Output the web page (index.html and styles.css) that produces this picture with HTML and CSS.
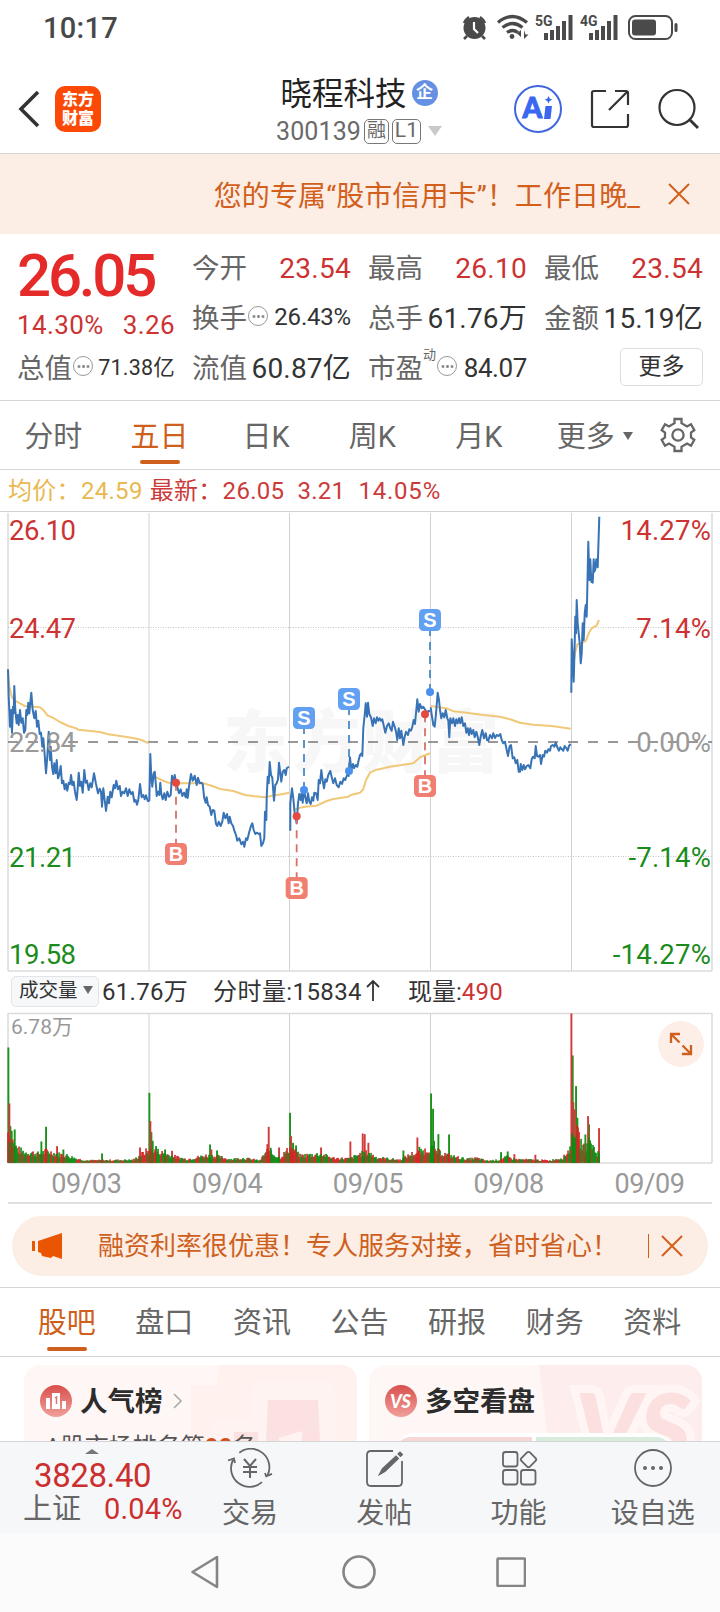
FILE: index.html
```html
<!DOCTYPE html>
<html lang="zh-CN">
<head>
  <meta charset="UTF-8">
  <meta name="viewport" content="width=device-width, initial-scale=1.0">
  <title>晓程科技 300139</title>
  <link rel="stylesheet" href="styles.css">
</head>
<body>
  <div class="status">
    <span class="time">10:17</span>
    <svg class="status-icons" width="220" height="30" viewBox="0 0 220 30">
      <g fill="#4a4a4a">
        <circle cx="15.500" cy="15" r="11"/>
        <path d="M5 10a14 14 0 0 1 5-6M26 10a14 14 0 0 0-5-6M8 23l-3 3M23 23l3 3" fill="none" stroke="#4a4a4a" stroke-width="2.600"/>
        <path d="M15 9v7l4 4" fill="none" stroke="#fff" stroke-width="2.200"/>
        <path d="M39 9.500q14-12 29 0M43.500 14.500q10-8 20 0M48 19.500q5.500-4 11 0" fill="none" stroke="#4a4a4a" stroke-width="3.200"/>
        <circle cx="53" cy="23.500" r="2.400"/>
        <path d="M62 17v7l-4-3.500zM65 17v9l4.500-4.500h-3z"/>
        <text x="76" y="13" class="net">5G</text>
        <path d="M85 20h4v7h-4zM91 17h4v10h-4zM97 13h4v14h-4zM103 8h4v19h-4zM109.500 2h4v25h-4z"/>
        <text x="121" y="13" class="net">4G</text>
        <path d="M130 20h4v7h-4zM136 17h4v10h-4zM142 13h4v14h-4zM148 8h4v19h-4zM154.500 2h4v25h-4z"/>
        <rect x="170" y="3" width="43" height="23" rx="6.500" fill="none" stroke="#4a4a4a" stroke-width="2"/>
        <rect x="173" y="6.500" width="24" height="16" rx="3"/>
        <rect x="215.500" y="10" width="3" height="9" rx="1.500"/>
      </g>
    </svg>
  </div>

  <header class="header">
    <svg class="back" width="24" height="40" viewBox="0 0 24 40"><path d="M21 3L4 20l17 17" fill="none" stroke="#333" stroke-width="3.600"/></svg>
    <div class="logo">东方<br>财富</div>
    <div class="title">
      <div class="name">晓程科技<span class="badge">企</span></div>
      <div class="code">300139<i class="tag">融</i><i class="tag tag-l">L1</i><i class="down"></i></div>
    </div>
    <div class="tools">
      <svg width="50" height="50" viewBox="0 0 50 50">
        <circle cx="25" cy="25" r="23" fill="none" stroke="#3f66e0" stroke-width="2"/>
        <text x="9.500" y="34" class="ai">A</text>
        <path d="M32.500 22h6.500l-1.500 13h-6.500z" fill="#3a66f0"/>
        <path d="M35.500 12l1.200 2.500 2.500 1.200-2.500 1.200-1.200 2.500-1.200-2.500-2.500-1.200 2.500-1.200z" fill="#3a66f0"/>
      </svg>
      <svg width="40" height="40" viewBox="0 0 40 40" fill="none" stroke="#333" stroke-width="2.200">
        <path d="M16 2H4q-2 0-2 2v32q0 2 2 2h32q2 0 2-2V25M25 2h11q2 0 2 2v12M37 3L19 21"/>
      </svg>
      <svg width="42" height="42" viewBox="0 0 42 42" fill="none" stroke="#333" stroke-width="2.200">
        <circle cx="20" cy="19.500" r="17.500"/><path d="M32 31l9 9" stroke-width="2.800"/>
      </svg>
    </div>
  </header>

  <div class="banner">
    <span>您的专属“股市信用卡”！工作日晚_</span>
    <svg class="close" width="22" height="22" viewBox="0 0 22 22"><path d="M1 1l20 20M21 1L1 21"/></svg>
  </div>

  <section class="quote">
    <div class="main">
      <div class="price">26.05</div>
      <div class="change"><span>14.30%</span><span>3.26</span></div>
      <div class="cell"><label>总值</label><i class="more-dot"></i><b class="small">71.38亿</b></div>
    </div>
    <div class="grid">
      <div class="cell"><label>今开</label><b class="red">23.54</b></div>
      <div class="cell"><label>最高</label><b class="red">26.10</b></div>
      <div class="cell"><label>最低</label><b class="red">23.54</b></div>
      <div class="cell"><label>换手</label><i class="more-dot"></i><b class="mid">26.43%</b></div>
      <div class="cell"><label>总手</label><b>61.76万</b></div>
      <div class="cell"><label>金额</label><b>15.19亿</b></div>
      <div class="cell"><label>流值</label><b>60.87亿</b></div>
      <div class="cell"><label>市盈</label><sup>动</sup><i class="more-dot"></i><b class="pe">84.07</b></div>
      <div class="cell"><button class="btn-more">更多</button></div>
    </div>
  </section>

  <nav class="period">
    <a>分时</a><a class="active">五日</a><a>日K</a><a>周K</a><a>月K</a><a>更多<i class="tri"></i></a>
    <svg width="36" height="36" viewBox="0 0 36 36" fill="none" stroke="#666" stroke-width="2.300">
      <path d="M14.500 2h7v4.200l5.500 3.200 4-2.200 3.300 6-3.300 2.300v5l3.300 2.300-3.300 6-4-2.200-5.500 3.200V34h-7v-4.200L9 26.600l-4 2.200-3.300-6L5 20.500v-5l-3.300-2.300 3.300-6 4 2.200 5.500-3.200z"/>
      <circle cx="18" cy="18" r="5.600"/>
    </svg>
  </nav>

  <div class="info"><span class="avg">均价：24.59</span><span>最新：26.05</span><span>3.21</span><span>14.05%</span></div>

  <svg id="chart" class="chart" width="720" height="462" viewBox="0 0 720 462">
    <text class="watermark" x="362" y="257">东方财富</text>
    <g class="lines">
      <path d="M0 1.500H720" />
      <path d="M149 3V461M289.500 3V461M430.500 3V461M571.500 3V461"/>
      <path class="edge" d="M8 3V461M712 3V461M8 461H712"/>
      <path class="dot" d="M8 117.500H712M8 346.500H712"/>
    </g>
    <path class="zero" d="M8 232H712"/>
    <g id="series"></g>
    <g class="axis">
      <text class="up" x="9" y="30">26.10</text>
      <text class="up" x="9" y="128">24.47</text>
      <text x="9" y="242">22.84</text>
      <text class="dn" x="9" y="357">21.21</text>
      <text class="dn" x="9" y="454">19.58</text>
    </g>
    <g class="axis right">
      <text class="up" x="711" y="30">14.27%</text>
      <text class="up" x="711" y="128">7.14%</text>
      <text x="711" y="242">0.00%</text>
      <text class="dn" x="711" y="357">-7.14%</text>
      <text class="dn" x="711" y="454">-14.27%</text>
    </g>
    <g id="marks"></g>
  </svg>

  <div class="vol-info">
    <span class="select">成交量<i class="tri"></i></span>
    <span class="total">61.76万</span>
    <span class="minute">分时量:15834<svg width="14" height="22" viewBox="0 0 14 22"><path d="M7 22V2M1 8l6-6 6 6" fill="none" stroke="#333" stroke-width="1.800"/></svg></span>
    <span>现量:<em>490</em></span>
  </div>

  <div class="volume">
    <svg width="720" height="153" viewBox="0 0 720 153">
      <g class="lines">
        <path d="M149 1V151M289.500 1V151M430.500 1V151M571.500 1V151"/>
        <path class="edge" d="M8 1.500H712M8 1V151M712 1V151M8 151H712"/>
      </g>
      <text class="vmax" x="11" y="22">6.78万</text>
      <g id="bars"></g>
    </svg>
    <div class="expand">
      <svg width="24" height="24" viewBox="0 0 24 24" fill="none" stroke="#cf611f" stroke-width="2.300"><path d="M2 11V2h9M2 2l8.500 8.500M22 13v9h-9M22 22l-8.500-8.500"/></svg>
    </div>
  </div>
  <div class="dates"><span>09/03</span><span>09/04</span><span>09/05</span><span>09/08</span><span>09/09</span></div>

  <div class="promo">
    <svg width="32" height="28" viewBox="0 0 32 28" fill="#ea5504"><path d="M1 9h3v10H1zM7 9l24-8v26l-9-3-2 2-9-2-1-3-3-1z"/></svg>
    <span>融资利率很优惠！专人服务对接，省时省心！</span>
    <i class="bar"></i>
    <svg class="close" width="22" height="22" viewBox="0 0 22 22"><path d="M1 1l20 20M21 1L1 21"/></svg>
  </div>

  <nav class="tabs">
    <a class="active">股吧</a><a>盘口</a><a>资讯</a><a>公告</a><a>研报</a><a>财务</a><a>资料</a>
  </nav>

  <div class="cards">
    <div class="card rank">
      <svg class="deco" width="166" height="76" viewBox="0 0 166 76">
        <path d="M28 0H166V76H0V20h26z" fill="#fdecea" opacity=".6"/>
        <path d="M62 16h80l4 60H20V54h40z" fill="#fff3f1"/>
        <path d="M77 35h50l2 41H43V67h24v9h8z" fill="#fbe1e0"/>
        <path d="M88 73l23-7v10H88z" fill="#fff3f1"/>
      </svg>
      <div class="card-head">
        <svg width="32" height="32" viewBox="0 0 32 32">
          <defs><linearGradient id="redFill" x2="0" y2="1"><stop stop-color="#d94f4c"/><stop offset="1" stop-color="#f0a09b"/></linearGradient></defs>
          <circle cx="16" cy="16" r="16" fill="url(#redFill)"/>
          <path d="M6 13h4v11H6zM12 8h8v16h-8zM22 16h4v8h-4z" fill="#fff"/>
          <path d="M15 13l1.500-1v7" fill="none" stroke="#e07370" stroke-width="1.500"/>
        </svg>
        <h3>人气榜</h3>
        <svg width="10" height="16" viewBox="0 0 10 16"><path d="M1 1l7 7-7 7" fill="none" stroke="#aaa" stroke-width="1.600"/></svg>
      </div>
      <p>A股市场排名第<b>90</b>名</p>
    </div>
    <div class="card versus">
      <svg class="deco" width="163" height="76" viewBox="0 0 163 76">
        <path d="M0 0H163V76H9z" fill="#fdeeed"/>
        <text x="36" y="100" class="deco-vs">VS</text>
      </svg>
      <div class="card-head">
        <svg width="32" height="32" viewBox="0 0 32 32">
          <circle cx="16" cy="16" r="16" fill="url(#redFill)"/>
          <text x="15.500" y="22.500" class="vs">VS</text>
        </svg>
        <h3>多空看盘</h3>
      </div>
      <div class="ratio"><i></i><i></i></div>
    </div>
  </div>

  <footer class="bottom">
    <div class="index">
      <i class="up-tri"></i>
      <div class="point">3828.40</div>
      <div class="sz"><span>上证</span><em>0.04%</em></div>
    </div>
    <div class="act">
      <svg width="46" height="40" viewBox="0 0 46 40" fill="none" stroke="#666" stroke-width="1.800">
        <path d="M12.300 4.700A18.600 18.600 0 0 1 40.500 27.500M38 25l1.200 3.300 5.800-2.500M35 34.200A18.600 18.600 0 0 1 6 12M1 12.500l6-2 1 4.500"/>
        <path d="M17 11l6 7 6-7M16 19h14M16 24h14M23 18v12" stroke-width="2"/>
      </svg>
      <span>交易</span>
    </div>
    <div class="act">
      <svg width="40" height="40" viewBox="0 0 40 40" fill="none" stroke="#666" stroke-width="1.800">
        <path d="M29 3H7Q3 3 3 7v27q0 4 4 4h27q4 0 4-4V13"/>
        <path d="M16 26l2.500-5L32 8.500l2 2L21 23zM34.500 6l1.500-1.500 2 2-1.500 1.500z" fill="#666"/>
      </svg>
      <span>发帖</span>
    </div>
    <div class="act">
      <svg width="40" height="40" viewBox="0 0 40 40" fill="none" stroke="#666" stroke-width="1.800">
        <rect x="4" y="4" width="14.500" height="14.500" rx="2.500"/>
        <rect x="4" y="22" width="14.500" height="14.500" rx="2.500"/>
        <rect x="22" y="22" width="14.500" height="14.500" rx="2.500"/>
        <rect x="23.500" y="5.500" width="12" height="12" rx="2" transform="rotate(45 29.500 11.500)"/>
      </svg>
      <span>功能</span>
    </div>
    <div class="act">
      <svg width="40" height="40" viewBox="0 0 40 40">
        <circle cx="20" cy="20" r="18" fill="none" stroke="#666" stroke-width="1.800"/>
        <g fill="#666"><circle cx="12" cy="20" r="2"/><circle cx="20" cy="20" r="2"/><circle cx="28" cy="20" r="2"/></g>
      </svg>
      <span>设自选</span>
    </div>
  </footer>

  <div class="sysnav">
    <svg width="30" height="34" viewBox="0 0 30 34"><path d="M27 2v30L2.500 17z"/></svg>
    <svg width="34" height="34" viewBox="0 0 34 34"><circle cx="17" cy="17" r="15.500"/></svg>
    <svg width="30" height="30" viewBox="0 0 30 30"><rect x="1.500" y="1.500" width="27.500" height="27.500" rx="1"/></svg>
  </div>

  <script src="chart.js"></script>
</body>
</html>
```

FILE: styles.css
```css
* {
  box-sizing: border-box;
}
body {
  margin: 0;
  width: 720px;
  height: 1612px;
  overflow: hidden;
  background: #fff;
  color: #333;
  font-family: Roboto, "Noto Sans CJK SC", sans-serif;
}
svg {
  display: block;
  flex: none;
}
i, em {
  font-style: normal;
}

/* 状态栏 */
.status {
  height: 56px;
  padding: 0 41px 0 43px;
  display: flex;
  justify-content: space-between;
  align-items: center;
}
.time {
  font-size: 29px;
  font-weight: 500;
  letter-spacing: .3px;
  color: #484848;
}
.net {
  font: 700 14px "Roboto", sans-serif;
}

/* 头部 */
.header {
  height: 98px;
  padding-left: 17px;
  display: flex;
  border-bottom: 1px solid #d6d6d6;
}
.back {
  margin-top: 33px;
}
.logo {
  width: 46px;
  height: 46px;
  margin: 30px 0 0 14px;
  padding-top: 4px;
  border-radius: 10px;
  background: #fc4a06;
  color: #fff;
  font-size: 16px;
  font-weight: 900;
  line-height: 19px;
  text-align: center;
}
.title {
  width: 300px;
  margin-left: 108px;
  padding-top: 12px;
  text-align: center;
}
.name {
  display: flex;
  align-items: center;
  justify-content: center;
  height: 46px;
  font-size: 31.500px;
  color: #222;
}
.badge {
  width: 26px;
  height: 26px;
  margin: 4px 0 0 5px;
  border-radius: 50%;
  background: #6690e4;
  color: #fff;
  font-size: 17px;
  font-weight: 700;
  line-height: 25px;
  text-align: center;
}
.code {
  display: flex;
  align-items: center;
  justify-content: center;
  height: 30px;
  margin-top: 2px;
  font-size: 25px;
  letter-spacing: .1px;
  color: #6a6a6a;
}
.tag {
  width: 25px;
  height: 25px;
  margin-left: 3px;
  border: 1px solid #777;
  border-radius: 5px;
  font-size: 19px;
  line-height: 21px;
  text-align: center;
}
.tag-l {
  width: 29px;
  font-size: 21px;
}
.down {
  margin-left: 7px;
  border: 7px solid transparent;
  border-top: 10px solid #c9c9c9;
  border-bottom: 0;
}
.tools {
  display: flex;
  align-items: center;
  gap: 27px;
  height: 50px;
  margin: 28px 0 0 4px;
}
.ai {
  font: 900 28px Lato, sans-serif;
  fill: #3a66f0;
  stroke: #3a66f0;
  stroke-width: 1px;
}

.banner {
  height: 80px;
  padding: 0 30px 1px 0;
  display: flex;
  align-items: center;
  justify-content: flex-end;
  background: #fcede5;
  color: #d2601c;
  font-size: 28px;
  letter-spacing: .1px;
}
.banner .close {
  margin-left: 28px;
}
.close {
  fill: none;
  stroke: #d2601c;
  stroke-width: 2;
}

/* 行情 */
.quote {
  height: 167px;
  padding: 9px 16px 0 17px;
  display: flex;
  border-bottom: 1px solid #d6d6d6;
}
.main {
  width: 158px;
  margin-right: 17px;
}
.price {
  height: 61px;
  font-size: 60px;
  font-weight: 500;
  line-height: 66px;
  letter-spacing: -3.200px;
  color: #e52a2a;
}
.change {
  display: flex;
  justify-content: space-between;
  height: 39px;
  font-size: 26px;
  line-height: 42px;
  letter-spacing: .4px;
  color: #cc3333;
}
.grid {
  flex: 1;
  display: grid;
  grid-template-columns: 159px 159px 159px;
  grid-auto-rows: 50px;
  column-gap: 17px;
}
.cell {
  display: flex;
  align-items: center;
  height: 50px;
}
.cell label {
  margin-top: -5px;
  font-size: 27.500px;
  color: #666;
}
.cell b {
  margin: -4px 0 0 auto;
  font-size: 28px;
  font-weight: 400;
  letter-spacing: .2px;
  white-space: nowrap;
}
.cell b.red {
  margin-top: 0;
  font-size: 28px;
  letter-spacing: .3px;
  color: #cc3333;
}
.cell b.small {
  margin-top: -6px;
  font-size: 21.500px;
}
.cell b.mid {
  margin-top: -2px;
  font-size: 24px;
  letter-spacing: -.2px;
}
.cell b.pe {
  margin-top: 0;
  font-size: 26px;
  letter-spacing: -.4px;
}
.cell sup {
  align-self: flex-start;
  margin-top: 1px;
  font-size: 13px;
  color: #666;
}
.more-dot {
  flex: none;
  width: 20px;
  height: 20px;
  margin: -4px 0 0 1px;
  border: 1.500px solid #999;
  border-radius: 50%;
  background: radial-gradient(circle, #888 1.200px, transparent 1.600px) center / 4.500px 5px repeat-x;
  background-clip: content-box;
  padding: 0 1.500px;
}
.btn-more {
  width: 83px;
  height: 38px;
  margin: -2px 0 0 auto;
  border: 1px solid #ddd;
  border-radius: 5px;
  background: #fff;
  color: #333;
  font-family: inherit;
  font-size: 23px;
  line-height: 34px;
}

/* 周期切换 */
.period {
  height: 69px;
  display: flex;
  align-items: center;
  border-bottom: 1px solid #d6d6d6;
  font-size: 29px;
  color: #666;
}
.period a {
  position: relative;
  width: 106.400px;
  line-height: 72px;
  height: 68px;
  text-align: center;
  white-space: nowrap;
}
.period a:nth-child(6) {
  padding-left: 19px;
}
.period svg {
  margin-left: 22px;
}
.period .active,
.tabs .active {
  color: #cf5f1c;
}
.active::after {
  content: "";
  position: absolute;
  left: 50%;
  bottom: 5px;
  width: 40px;
  height: 4px;
  margin-left: -20px;
  border-radius: 2px;
  background: #cf5f1c;
}
.tri {
  display: inline-block;
  margin-left: 8px;
  vertical-align: 7px;
  border: 5px solid transparent;
  border-top: 8px solid #666;
  border-bottom: 0;
}
.info {
  display: flex;
  height: 40px;
  padding-left: 8px;
  font-size: 24px;
  line-height: 42px;
  letter-spacing: .3px;
  color: #cc3a3a;
}
.info span {
  margin-right: 13px;
}
.info .avg {
  margin-right: 7px;
  color: #e9b850;
}
.info span:last-child {
  letter-spacing: .8px;
}

/* 走势图 */
.lines path {
  fill: none;
  stroke: #d2d2d2;
  stroke-width: 1;
}
.lines .edge {
  stroke: #dcdcdc;
  stroke-width: 1.600;
}
.lines .dot {
  stroke: #c4c4c4;
  stroke-dasharray: 1 1.500;
}
.zero {
  stroke: #777;
  stroke-width: 1.600;
  stroke-dasharray: 10 10;
}
.watermark {
  font-size: 68px;
  font-weight: 900;
  letter-spacing: 1.500px;
  fill: #f7f7f7;
  text-anchor: middle;
}
.axis text {
  font-size: 27.500px;
  letter-spacing: -.5px;
  fill: #999;
}
.axis.right text {
  letter-spacing: .2px;
  text-anchor: end;
}
.axis .up {
  fill: #cc3333;
}
.axis .dn {
  fill: #1b8c1b;
}
.axis.right .up {
  fill: #cc3333;
}
.axis.right .dn {
  fill: #1b8c1b;
}
.axis text.up {
  fill: #cc3333;
}
.axis text.dn {
  fill: #1b8c1b;
}
.trend,
.mean {
  fill: none;
  stroke: #3873b6;
  stroke-width: 2;
  stroke-linejoin: round;
}
.mean {
  stroke: #f0c878;
}
.mark-text {
  font: 700 20px "Liberation Sans", sans-serif;
  fill: #fff;
  text-anchor: middle;
}

/* 成交量 */
.vol-info {
  display: flex;
  align-items: center;
  height: 40px;
  padding: 0 0 2px 11px;
  font-size: 24px;
}
.vol-info > span {
  margin-top: -3px;
}
.vol-info .select {
  width: 88px;
  height: 31px;
  margin: 1px 3px 0 0;
  padding-left: 7px;
  border: 1px solid #e2e4e8;
  border-radius: 5px;
  background: #f7f8fa;
  font-size: 19.500px;
  line-height: 27px;
  white-space: nowrap;
}
.select .tri {
  margin-left: 5px;
  vertical-align: 3px;
}
.vol-info .total {
  margin-right: 25px;
  letter-spacing: .3px;
}
.minute {
  display: flex;
  align-items: center;
  margin-right: 28px;
  letter-spacing: .4px;
}
.minute svg {
  margin-left: 4px;
}
.vol-info em {
  letter-spacing: .3px;
  color: #cc3333;
}
.volume {
  position: relative;
  height: 153px;
}
.vmax {
  font-size: 21px;
  fill: #999;
}
.expand {
  position: absolute;
  right: 16px;
  top: 9px;
  width: 46px;
  height: 46px;
  display: flex;
  align-items: center;
  justify-content: center;
  border-radius: 50%;
  background: #fdefe8;
}
.dates {
  display: flex;
  height: 39px;
  margin: 0 8px;
  border-bottom: 2px solid #e0e0e0;
  font-size: 27px;
  line-height: 39px;
  color: #999;
  letter-spacing: -.3px;
}
.dates span {
  flex: 1;
  padding-left: 16px;
  text-align: center;
}

.promo {
  display: flex;
  align-items: center;
  height: 60px;
  margin: 12px 12px 11px;
  padding-left: 19px;
  border-radius: 30px;
  background: #fcede5;
  color: #cf5f1c;
  font-size: 26px;
}
.promo span {
  width: 536px;
  margin-left: 35px;
  line-height: 60px;
}
.promo .bar {
  width: 1px;
  height: 24px;
  margin: 0 12px 0 14px;
  background: #cf5f1c;
}

.tabs {
  display: flex;
  height: 70px;
  padding: 0 19px 0 18px;
  border-top: 1px solid #d6d6d6;
  border-bottom: 1px solid #d6d6d6;
  font-size: 29px;
  color: #666;
}
.tabs a {
  position: relative;
  flex: 1;
  height: 68px;
  line-height: 71px;
  text-align: center;
}

.cards {
  display: flex;
  gap: 12px;
  height: 84px;
  padding: 8px 18px 0 24px;
  overflow: hidden;
}
.card {
  position: relative;
  width: 333px;
  height: 150px;
  border-radius: 16px;
  background: #fff7f5;
  overflow: hidden;
}
.deco {
  position: absolute;
  right: 0;
  top: 0;
}
.deco-vs {
  font: italic 900 100px Lato, sans-serif;
  fill: #fbe0df;
  stroke: #fef5f4;
  stroke-width: 16px;
  paint-order: stroke;
}
.card-head {
  position: relative;
  display: flex;
  align-items: center;
  height: 72px;
  padding-left: 16px;
}
.card h3 {
  margin: -4px 10px 0 8px;
  font-size: 27.500px;
  font-weight: 700;
  color: #2c2c2c;
}
.card p {
  position: relative;
  margin: -8px 0 0 21px;
  font-size: 24px;
  line-height: 36px;
  color: #555;
}
.card p b {
  color: #d2501c;
}
.vs {
  font: italic 900 18px Lato, sans-serif;
  fill: #fff;
  text-anchor: middle;
}
.ratio {
  position: relative;
  display: flex;
  gap: 4px;
  height: 40px;
  margin: -4px 30px 0 26px;
  padding: 4px 0 0;
  border-radius: 20px 20px 0 0;
  background: #fff;
  overflow: hidden;
}
.ratio i {
  flex: 1;
  background: #f7d8d8;
  border-radius: 16px 0 0 0;
}
.ratio i + i {
  background: #d8ebdc;
  border-radius: 0 16px 0 0;
}

/* 底栏 */
.bottom {
  position: relative;
  display: flex;
  height: 92px;
  border-top: 1px solid #d3d5d8;
  background: #f6f7f9;
  color: #666;
}
.index {
  width: 183px;
}
.up-tri {
  display: block;
  width: 0;
  margin: 7px 0 0 85px;
  border: 7px solid transparent;
  border-bottom: 5px solid #777;
  border-top: 0;
}
.point {
  height: 40px;
  padding-left: 34px;
  font-size: 33px;
  line-height: 43px;
  letter-spacing: -.4px;
  color: #cc2f2f;
}
.sz {
  display: flex;
  justify-content: space-between;
  height: 38px;
  padding-left: 23px;
  font-size: 29px;
  line-height: 30px;
}
.sz em {
  color: #cc2f2f;
  letter-spacing: .2px;
}
.act {
  width: 134.500px;
  display: flex;
  flex-direction: column;
  align-items: center;
  padding-top: 6px;
  font-size: 28px;
}
.act span {
  margin-top: 5px;
  line-height: 42px;
}
.sysnav {
  display: flex;
  align-items: center;
  height: 79px;
  padding: 0 0 2px 190px;
  background: #fbfbfb;
}
.sysnav svg {
  fill: none;
  stroke: #858585;
  stroke-width: 2.600;
  stroke-linejoin: round;
}
.sysnav svg + svg {
  margin-left: 122px;
}
.sysnav svg:last-child {
  margin-left: 120px;
}
```

FILE: chart.js
```js
// 坐标按 3 倍像素记录，绘制时除以 3；dx 为该段的横向偏移
const days = [
  { dx: 0,
    price: '24,478 26,560 28,600 30,650 33,600 36,668 39,590 41,610 43,528 46,600 50,640 53,615 56,645 60,600 64,638 68,625 72,668 76,660 79,600 82,615 85,578 88,610 94,548 98,600 103,625 107,603 111,650 115,632 119,672 123,668 127,710 130,685 134,735 138,790 142,740 146,665 150,750 152,710 156,770 160,792 163,760 167,790 170,750 174,805 178,795 182,768 186,820 190,812 194,838 198,822 202,842 206,818 210,822 213,795 217,825 221,815 225,845 230,870 233,835 236,788 240,828 244,815 248,848 253,780 257,818 261,812 266,840 271,820 275,832 282,790 288,822 294,850 299,836 303,845 306,890 310,835 314,870 318,903 323,860 327,880 331,845 335,862 341,825 345,835 349,812 354,838 359,828 363,858 368,845 373,850 378,835 383,858 388,838 393,852 398,846 403,875 407,870 411,884 415,870 420,822 425,862 430,855 434,868 438,856 443,872 448,874',
    mean: '24,478 28,530 36,562 45,572 60,580 75,588 100,590 120,592 132,602 142,616 158,623 180,636 205,648 228,655 235,659 265,662 300,666 325,673 365,679 400,684 425,690 446,700' },
  { dx: 0,
    price: '448,874 451,732 454,800 457,830 461,790 464,785 468,828 470,858 474,845 478,855 481,818 484,852 488,868 493,850 497,870 502,845 507,860 512,855 516,797 520,820 524,795 528,818 532,830 537,850 542,838 547,858 552,848 557,862 560,838 563,864 567,830 573,792 578,812 584,797 590,825 594,803 599,820 604,818 608,822 613,865 617,878 620,862 624,885 629,890 634,915 638,900 643,902 648,942 652,948 656,935 662,948 667,935 671,908 676,925 681,912 686,940 689,920 694,940 699,948 704,965 708,975 712,992 718,985 724,1003 729,995 733,1010 738,985 742,990 748,965 753,948 757,940 761,960 766,972 770,968 776,972 780,970 784,1008 789,1000 793,985 795,905 799,930 800,860 803,800 806,820 809,756 813,795 817,803 822,872 826,825 830,820 834,808 837,758 841,790 844,815 848,785 853,780 857,795 860,775 867,770',
    mean: '455,795 470,803 485,810 505,818 528,820 560,820 610,820 635,827 660,837 700,843 735,855 765,859 797,862 815,857 850,852 867,848' },
  { dx: 840,
    price: '31,962 31,880 36,835 40,865 44,910 50,940 54,880 58,852 62,870 65,850 68,878 72,840 76,862 80,880 84,850 88,875 92,882 96,862 100,872 103,848 108,850 113,870 116,810 120,820 124,780 128,812 132,835 136,808 140,815 145,795 151,783 156,805 160,820 165,805 170,825 176,832 181,815 186,822 191,805 196,810 201,795 206,798 210,742 214,780 219,762 222,775 227,765 232,770 236,750 240,735 245,730 247,738 250,655 254,615 257,580 261,620 264,578 268,612 273,622 278,648 282,625 287,640 291,622 295,632 299,625 303,632 307,628 312,650 316,668 321,648 326,640 331,655 335,662 339,635 344,650 348,665 352,690 356,655 360,685 364,662 368,690 370,705 374,680 378,665 384,675 388,658 393,662 397,650 401,630 405,642 409,600 412,568 416,605 420,582 425,595 430,590 436,600 441,608 446,602 450,605',
    mean: '40,900 55,895 75,890 110,887 140,873 160,867 205,860 215,854 240,848 250,838 258,810 270,788 290,779 330,770 400,760 420,742 450,730' },
  { dx: 840,
    price: '452,592 456,620 460,645 464,650 468,610 473,548 477,570 480,600 484,625 488,610 493,622 497,600 502,625 505,632 508,682 511,625 516,640 520,625 525,648 529,628 533,640 537,625 541,640 545,622 550,648 555,640 559,668 563,655 567,675 571,655 575,672 580,660 584,682 589,665 593,680 598,705 602,680 607,660 612,685 617,670 621,690 625,692 630,675 636,685 640,670 645,684 650,675 656,678 661,672 665,690 670,700 675,695 680,720 684,738 689,708 693,705 698,745 703,742 707,760 712,750 716,785 720,785 722,762 727,780 731,765 735,778 740,768 745,765 751,775 755,748 759,740 764,745 767,708 771,738 775,740 780,735 783,762 788,735 792,740 796,722 801,728 805,718 810,722 813,708 818,705 823,710 827,698 832,712 837,722 841,712 846,718 850,722 854,708 859,714 863,722 867,708 872,702',
    mean: '452,588 475,592 500,595 520,604 560,608 610,615 660,620 690,628 720,638 760,644 815,648 872,656' },
  { dx: 1440,
    price: '274,548 275,388 278,440 281,515 284,400 286,320 288,370 290,270 293,340 296,370 299,400 302,460 305,430 308,340 311,390 314,310 317,285 320,320 322,240 325,95 328,210 331,148 334,215 338,218 341,148 343,185 346,178 349,148 353,172 358,20',
    mean: '275,500 280,460 285,430 292,403 305,400 318,392 327,368 335,355 350,346 357,330' }
]

// 买卖点: 类型, x, 圆点y, 标签y
const trades = [
  ['B', 528, 818, 1032],
  ['B', 890, 919, 1134],
  ['S', 912, 840, 624],
  ['S', 1047, 783, 567],
  ['B', 1275, 613, 828],
  ['S', 1290, 546, 330]
]

const NS = 'http://www.w3.org/2000/svg'
function add(parent, tag, attrs, text) {
  const el = document.createElementNS(NS, tag)
  for (const k in attrs) el.setAttribute(k, attrs[k])
  if (text) el.textContent = text
  parent.appendChild(el)
}

function toPoints(str, dx) {
  return str.split(' ').map(p => {
    const [x, y] = p.split(',').map(Number)
    return ((x + dx) / 3).toFixed(1) + ',' + (y / 3).toFixed(1)
  }).join(' ')
}

const series = document.getElementById('series')
days.forEach(d => {
  add(series, 'polyline', { class: 'mean', points: toPoints(d.mean, d.dx) })
  add(series, 'polyline', { class: 'trend', points: toPoints(d.price, d.dx) })
})

const marks = document.getElementById('marks')
trades.forEach(([type, x, dot, label]) => {
  const buy = type === 'B'
  const cx = x / 3
  const ly = label / 3
  add(marks, 'line', {
    x1: cx, x2: cx, y1: dot / 3, y2: ly + (buy ? -11 : 11),
    stroke: buy ? '#d97068' : '#4a88c8', 'stroke-width': 1.8, 'stroke-dasharray': '8 6'
  })
  add(marks, 'circle', { cx, cy: dot / 3, r: 4, fill: buy ? '#e5493f' : '#4a90ee' })
  add(marks, 'rect', { x: cx - 11, y: ly - 11, width: 22, height: 22, rx: 4.5, fill: buy ? '#f07f72' : '#62a0f2' })
  add(marks, 'text', { class: 'mark-text', x: cx, y: ly + 7 }, type)
})

// 成交量轮廓: x, 高度
const base = [[24, 108], [36, 70], [55, 45], [75, 35], [95, 35], [115, 30], [140, 40], [170, 30], [200, 25], [230, 14], [260, 8], [400, 10], [440, 40], [470, 40], [510, 25], [560, 12], [620, 25], [650, 22], [690, 12], [730, 16], [780, 8], [800, 40], [840, 18], [870, 50], [900, 24], [960, 30], [1000, 16], [1050, 14], [1080, 30], [1105, 35], [1130, 18], [1200, 10], [1235, 30], [1260, 35], [1290, 50], [1320, 35], [1350, 24], [1400, 12], [1430, 16], [1460, 7], [1500, 10], [1520, 20], [1545, 12], [1600, 10], [1650, 8], [1690, 18], [1710, 50], [1725, 120], [1740, 75], [1755, 45], [1770, 75], [1790, 30], [1797, 40]]
const up = [[28, 178], [38, 70], [171, 50], [420, 46], [451, 125], [516, 36], [634, 40], [802, 56], [806, 108], [837, 46], [873, 80], [963, 46], [1051, 64], [1088, 88], [1094, 86], [1105, 60], [1252, 76], [1543, 26], [1606, 24], [1714, 448], [1720, 182], [1724, 160], [1736, 66], [1764, 140], [1797, 104]]
const down = [[25, 346], [31, 110], [35, 96], [44, 100], [124, 64], [138, 108], [190, 40], [306, 28], [448, 210], [454, 92], [458, 66], [468, 50], [495, 40], [630, 55], [651, 37], [812, 45], [870, 150], [879, 60], [888, 52], [1210, 37], [1258, 48], [1293, 208], [1299, 162], [1302, 66], [1315, 86], [1347, 85], [1503, 32], [1523, 34], [1718, 322], [1728, 230], [1732, 135], [1756, 85], [1767, 115], [1770, 65]]

const bars = document.getElementById('bars')
const BOTTOM = 150.8
function bar(x, h, color, opacity) {
  add(bars, 'rect', { x: x / 3 - .9, y: BOTTOM - h / 3, width: 1.9, height: h / 3, fill: color, opacity })
}

let seed = 7
function rnd() {
  seed = (seed * 9301 + 49297) % 233280
  return seed / 233280
}
down.forEach(([x, h]) => bar(x, h, '#1a931a', 1))
up.forEach(([x, h]) => bar(x, h, '#d23a3a', 1))
let k = 0
for (let x = 24; x <= 1798; x += 3) {
  while (k < base.length - 2 && base[k + 1][0] < x) k++
  const [x0, h0] = base[k]
  const [x1, h1] = base[k + 1]
  const h = h0 + (h1 - h0) * (x - x0) / (x1 - x0)
  bar(x, Math.max(4, h * (.55 + rnd() * .6)), rnd() > .5 ? '#d22626' : '#128a12', .85)
}
```
